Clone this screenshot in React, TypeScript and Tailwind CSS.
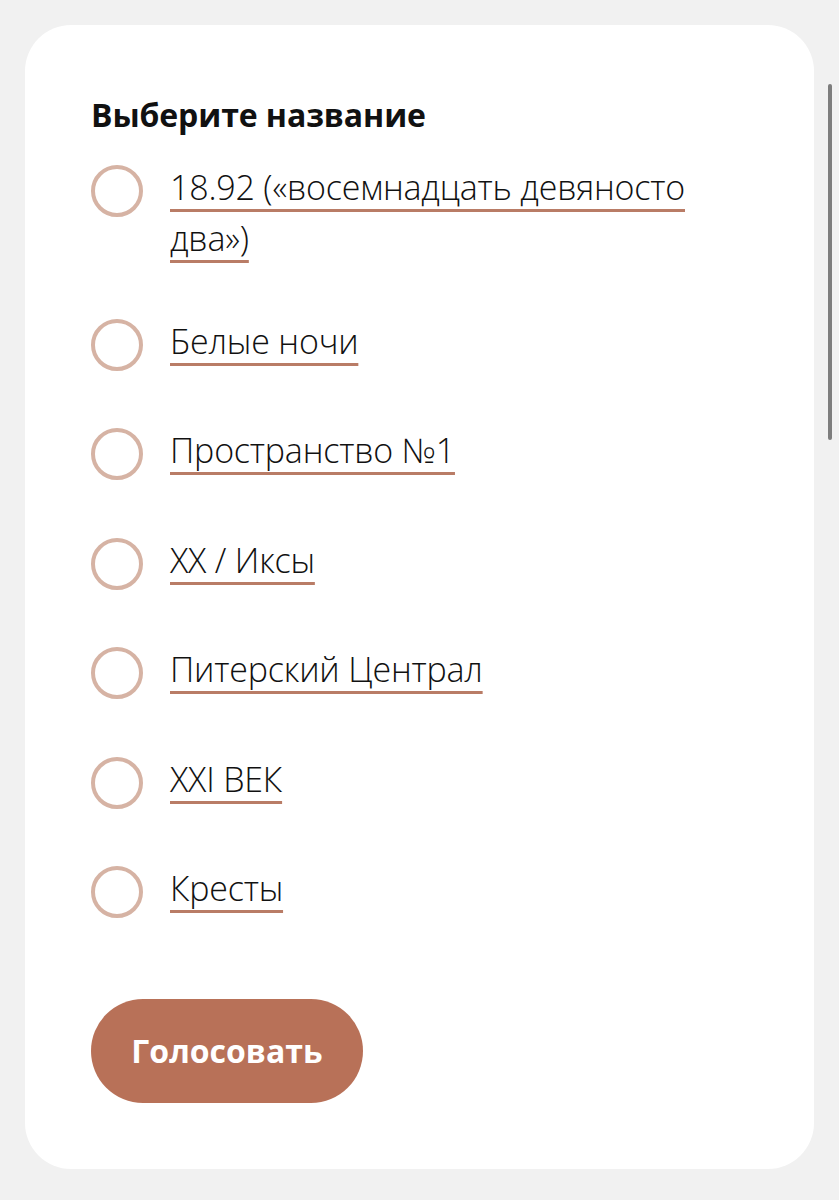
import { useState } from "react";

const OPTIONS = [
  "18.92 («восемнадцать девяносто два»)",
  "Белые ночи",
  "Пространство №1",
  "XX / Иксы",
  "Питерский Централ",
  "XXI ВЕК",
  "Кресты",
];

export default function App() {
  const [selected, setSelected] = useState<number | null>(null);

  return (
    <div className="relative min-h-[1200px] bg-[#f1f1f1] px-[25px] pt-[25px] pb-[32px] font-['Open_Sans',sans-serif] text-[#111]">
      {/* page scrollbar thumb */}
      <div className="absolute right-[7px] top-[84px] h-[356px] w-[4px] rounded-full bg-[#7d7d7d]" />

      <div className="rounded-[46px] bg-white pl-[66px] pr-[60px] pt-[70px] pb-[66px]">
        <h2 className="text-[32px] font-bold leading-[40px] tracking-[-0.1px]">Выберите название</h2>

        <div className="mt-[27px] flex flex-col gap-[54.5px]">
          {OPTIONS.map((label, i) => (
            <label
              key={label}
              className={`flex cursor-pointer items-start gap-[27px] ${i === 0 ? "-mb-[3px]" : ""}`}
              onClick={() => setSelected(i)}
            >
              <span className="mt-[3px] flex h-[52px] w-[52px] shrink-0 items-center justify-center rounded-full border-[4px] border-[#d6b3a4]">
                {selected === i && <span className="h-[24px] w-[24px] rounded-full bg-[#b87158]" />}
              </span>
              <span className="max-w-[540px] text-[34px] font-light leading-[51px] tracking-[-0.2px] underline decoration-[#b97c66] decoration-[3px] underline-offset-[9px]">
                {label}
              </span>
            </label>
          ))}
        </div>

        <button className="mt-[81px] flex h-[104px] w-[272px] items-center justify-center rounded-full bg-[#b87158] text-[32px] font-bold text-white">
          Голосовать
        </button>
      </div>
    </div>
  );
}
